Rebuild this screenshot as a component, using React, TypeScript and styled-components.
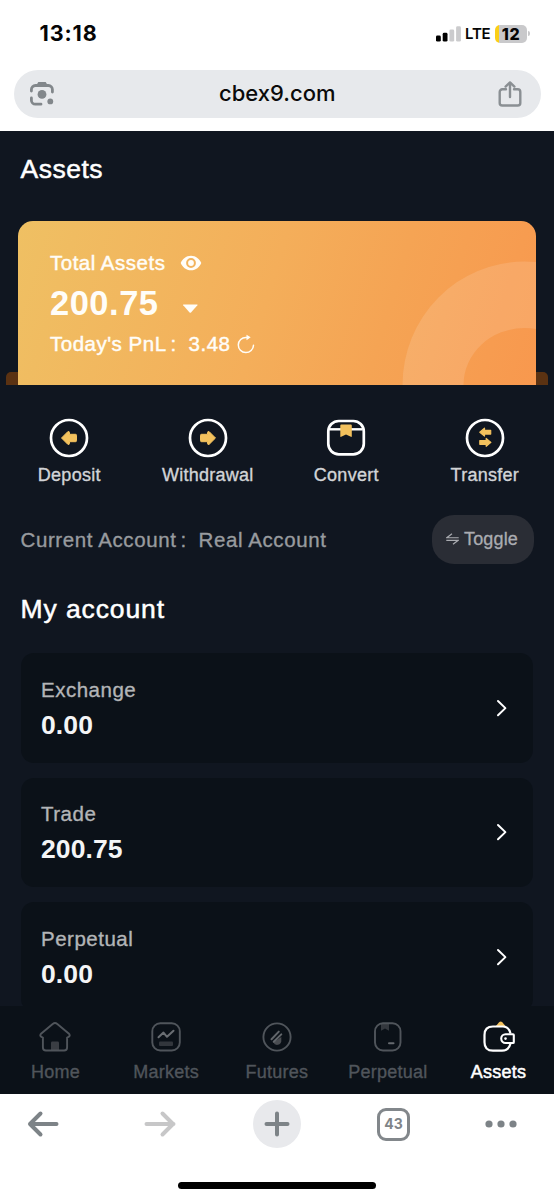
import React from 'react';
import styled, { createGlobalStyle } from 'styled-components';

const GlobalStyle = createGlobalStyle`
  * { box-sizing: border-box; }
  body {
    margin: 0;
    background: #fff;
    font-family: "Liberation Sans", Arial, "Noto Sans CJK SC", sans-serif;
  }
`;

const Screen = styled.div`
  width: 554px;
  height: 1199px;
  display: flex;
  flex-direction: column;
  overflow: hidden;
  background: #fff;
`;

/* Phone status bar */
const StatusBar = styled.header`
  height: 70px;
  flex: none;
  display: flex;
  justify-content: space-between;
  align-items: flex-start;
  padding: 20px 24px 0 39.5px;
  font-family: Inter, sans-serif;
  color: #050505;
`;

const Clock = styled.div`
  font-size: 21.5px;
  line-height: 27px;
  font-weight: 700;
  letter-spacing: 0.9px;
`;

const StatusRight = styled.div`
  display: flex;
  align-items: center;
  height: 27px;
`;

const Carrier = styled.span`
  margin-left: 4px;
  width: 25px;
  font-size: 15px;
  font-weight: 600;
  letter-spacing: -0.2px;
`;

const Battery = styled.div`
  margin-left: 5px;
  width: 32px;
  height: 18px;
  border-radius: 5px;
  background: linear-gradient(90deg, #fbcf17 0 4px, #c9c9cb 4px);
  font-size: 16px;
  line-height: 18px;
  font-weight: 800;
  text-align: center;
  letter-spacing: 0.6px;
`;

const BatteryTip = styled.i`
  width: 2px;
  height: 5px;
  margin-left: 1px;
  border-radius: 0 2px 2px 0;
  background: #c9c9cb;
`;

/* Browser address bar */
const AddressArea = styled.div`
  height: 61px;
  flex: none;
  padding: 0 13.5px;
`;

const AddressBar = styled.div`
  height: 47.5px;
  border-radius: 24px;
  background: #e7e9ec;
  display: flex;
  justify-content: space-between;
  align-items: center;
  padding: 0 17px 0 14.5px;
`;

const Url = styled.span`
  font-family: Inter, sans-serif;
  font-size: 22px;
  line-height: 28px;
  font-weight: 500;
  color: #0a0a0a;
  padding: 0 0 2px 3px;
`;

/* Web page */
const Page = styled.main`
  height: 875px;
  flex: none;
  overflow: hidden;
  background: #101620;
  padding-top: 23px;
`;

const Heading = styled.h1<{ $spacing: number }>`
  margin: 0 20.5px;
  font-size: 26.5px;
  line-height: 30px;
  font-weight: 400;
  letter-spacing: ${(p) => p.$spacing}px;
  color: #fff;
  -webkit-text-stroke: 0.5px #fff;
`;

const Wallet = styled.section`
  position: relative;
  margin-top: 37px;
  padding: 0 18px;
  &::before {
    content: "";
    position: absolute;
    left: 6px;
    right: 6px;
    bottom: 0;
    height: 13px;
    border-radius: 5px 5px 0 0;
    background: #5b3212;
  }
`;

const BalanceCard = styled.div`
  position: relative;
  height: 163.5px;
  border-radius: 15px 15px 0 0;
  overflow: hidden;
  padding: 28px 32px 0;
  color: #fffdf8;
  background: linear-gradient(107deg, #efc063 0%, #f4ae5a 48%, #f5a454 70%, #f8984e 100%);
`;

const Ring = styled.svg`
  position: absolute;
  right: 0;
  bottom: 0;
`;

const CardRow = styled.div<{ $top?: number; $height: number }>`
  display: flex;
  align-items: center;
  height: ${(p) => p.$height}px;
  margin-top: ${(p) => p.$top ?? 0}px;
`;

const CardText = styled.span`
  display: block;
  font-size: 20.5px;
  line-height: 28px;
  letter-spacing: 0.5px;
  -webkit-text-stroke: 0.45px currentColor;
`;

const Balance = styled.strong`
  font-size: 34.5px;
  line-height: 40px;
  letter-spacing: 0.5px;
`;

const WideColon = styled.span`
  display: inline-block;
  width: 22px;
  padding-left: 4px;
`;

const Gap = styled.span<{ $width: number }>`
  width: ${(p) => p.$width}px;
`;

const Actions = styled.div`
  display: grid;
  grid-template-columns: repeat(4, 1fr);
  padding-top: 33px;
`;

const Action = styled.div`
  display: flex;
  flex-direction: column;
  align-items: center;
  gap: 6.5px;
  font-size: 18px;
  line-height: 22px;
  letter-spacing: 0.25px;
  color: #d2d4d7;
  -webkit-text-stroke: 0.35px currentColor;
`;

const AccountRow = styled.div`
  display: flex;
  justify-content: space-between;
  align-items: center;
  margin: 28.5px 20.5px 29.5px;
  height: 49.5px;
`;

const AccountText = styled.div`
  padding-top: 2px;
  font-size: 20.5px;
  line-height: 28px;
  letter-spacing: 0.6px;
  color: #989b9f;
  -webkit-text-stroke: 0.35px currentColor;
`;

const ToggleButton = styled.button`
  width: 102px;
  height: 49.5px;
  border: 0;
  padding: 0 1px 0 0;
  border-radius: 22px;
  background: #2a2d35;
  color: #aaacb1;
  display: flex;
  align-items: center;
  justify-content: center;
  gap: 5px;
  font: 18px/24px "Liberation Sans", Arial, sans-serif;
  letter-spacing: 0.15px;
  -webkit-text-stroke: 0.3px currentColor;
`;

const AccountList = styled.div`
  display: flex;
  flex-direction: column;
  gap: 15px;
  padding: 29.5px 21px 0 20.5px;
`;

const AccountCard = styled.div`
  height: 109.5px;
  flex: none;
  border-radius: 13px;
  background: #0b1118;
  display: flex;
  justify-content: space-between;
  align-items: center;
  padding: 0 25px 0 20.5px;
`;

const AccountLabel = styled.div`
  font-size: 20.5px;
  line-height: 26px;
  letter-spacing: 0.5px;
  color: #b3b5b7;
  -webkit-text-stroke: 0.35px currentColor;
`;

const AccountValue = styled.div`
  margin-top: 7px;
  margin-bottom: -1px;
  font-size: 26.5px;
  line-height: 30px;
  font-weight: 700;
  letter-spacing: 0.1px;
  color: #f4f5f6;
`;

const TabBar = styled.nav`
  height: 88px;
  flex: none;
  background: #0b1118;
  display: grid;
  grid-template-columns: repeat(5, 1fr);
  padding-top: 14.5px;
`;

const Tab = styled.div<{ $active?: boolean }>`
  display: flex;
  flex-direction: column;
  align-items: center;
  gap: 8.5px;
  font-size: 18px;
  line-height: 22px;
  letter-spacing: 0.25px;
  color: ${(p) => (p.$active ? '#fff' : '#50555b')};
  -webkit-text-stroke: ${(p) => (p.$active ? 0.5 : 0.35)}px currentColor;
`;

/* Browser toolbar */
const BrowserBar = styled.footer`
  flex: 1;
  display: flex;
  flex-direction: column;
  background: #fff;
`;

const BrowserButtons = styled.div`
  display: grid;
  grid-template-columns: repeat(4, 48px) 29px;
  column-gap: 69px;
  justify-items: center;
  align-items: center;
  height: 60px;
  padding-left: 18.5px;
`;

const NewTab = styled.div`
  width: 48px;
  height: 48px;
  border-radius: 50%;
  background: #e8e9ec;
  display: grid;
  place-items: center;
`;

const TabCount = styled.div`
  width: 33px;
  height: 33px;
  border: 3.5px solid #82878b;
  border-radius: 9px;
  display: grid;
  place-items: center;
  font: 700 14px/20px Inter, sans-serif;
  color: #7f8488;
`;

const HomeIndicator = styled.div`
  width: 198px;
  height: 7px;
  border-radius: 4px;
  margin: 27.5px auto 0;
  background: #000;
`;

const SignalIcon = () => (
  <svg width="25" height="16" viewBox="0 0 25 16">
    <rect x="0" y="9.6" width="4.8" height="6" rx="1.4" fill="#000" />
    <rect x="6.7" y="6.8" width="4.8" height="8.8" rx="1.4" fill="#000" />
    <rect x="13.4" y="3.6" width="4.8" height="12" rx="1.4" fill="#cbcbcd" />
    <rect x="20.1" y="0.3" width="4.8" height="15.3" rx="1.4" fill="#cbcbcd" />
  </svg>
);

const LensIcon = () => (
  <svg width="28" height="28" viewBox="0 0 28 28" fill="none" stroke="#82878b" strokeWidth="2.8" strokeLinecap="round">
    <path d="M3.4 11V9.5a4 4 0 0 1 4-4h13a4 4 0 0 1 4 4V12" />
    <path d="M3.4 18v2.2a4 4 0 0 0 4 4H13" />
    <path d="M8.5 5 10.3 2h7.4l1.8 3z" fill="#82878b" stroke="none" />
    <circle cx="14" cy="14.4" r="4.4" fill="#82878b" stroke="none" />
    <circle cx="22.3" cy="21.4" r="2.9" fill="#82878b" stroke="none" />
  </svg>
);

const ShareIcon = () => (
  <svg width="28" height="28" viewBox="0 0 28 28" fill="none" stroke="#8a8f93" strokeWidth="2.4" strokeLinecap="round" strokeLinejoin="round">
    <path d="M10 9.3H6.3a2.6 2.6 0 0 0-2.6 2.6v11a2.6 2.6 0 0 0 2.6 2.6h15.4a2.6 2.6 0 0 0 2.6-2.6v-11a2.6 2.6 0 0 0-2.6-2.6H18" />
    <path d="M14 17V3M9.6 6.6 14 2.4l4.4 4.2" />
  </svg>
);

const EyeIcon = () => (
  <svg width="22" height="16" viewBox="0 0 22 16">
    <path fillRule="evenodd" fill="#fffdf8" d="M11 .7C16 .7 19.6 4 21.3 8 19.6 12 16 15.3 11 15.3S2.4 12 .7 8C2.4 4 6 .7 11 .7ZM11 3.1a4.900 4.900 0 1 0 0 9.800 4.900 4.900 0 0 0 0-9.800Z" />
    <circle cx="11" cy="8" r="2.9" fill="#fffdf8" />
  </svg>
);

const RefreshIcon = () => (
  <svg width="18" height="20" viewBox="0 0 18 20" fill="none" stroke="#fffdf8" strokeWidth="1.5" strokeLinecap="round">
    <path d="M11.5 3.400H9a7.600 7.600 0 1 0 7.500 7.800" />
    <path d="M9.500.8 13.700 3.300 9.500 6.200z" fill="#fffdf8" stroke="none" />
  </svg>
);

const DepositIcon = ({ flip }: { flip?: boolean }) => (
  <svg width="40" height="40" viewBox="0 0 40 40">
    <circle cx="20" cy="20" r="18" fill="none" stroke="#fff" strokeWidth="2.7" />
    <g transform={flip ? 'translate(40 0) scale(-1 1)' : undefined}>
      <path d="M12.500 20 18.700 13.800q1.600-1 1.800.7V16.300h6q1 0 1 1v5.400q0 1-1 1h-6v1.800q-.2 1.700-1.800.7z" fill="#f3c15d" stroke="#f3c15d" strokeWidth="1" strokeLinejoin="round" />
    </g>
  </svg>
);

const ConvertIcon = () => (
  <svg width="40" height="40" viewBox="0 0 40 40" fill="none">
    <rect x="2.300" y="3" width="35.500" height="33.300" rx="10.500" stroke="#fff" strokeWidth="2.700" />
    <path d="M4 11.300h32" stroke="#fff" strokeWidth="2.400" />
    <path d="M14.300 7.500q0-1 1-1h9.500q1 0 1 1v10.700q0 .9-.9.6L20 16.600l-4.800 2.200q-.9.300-.9-.6z" fill="#f3c15d" />
  </svg>
);

const TransferIcon = () => (
  <svg width="40" height="40" viewBox="0 0 40 40">
    <circle cx="20" cy="20" r="18" fill="none" stroke="#fff" strokeWidth="2.700" />
    <g fill="#f3c15d" stroke="#f3c15d" strokeWidth="1.200" strokeLinejoin="round">
      <path d="M14.800 14.200 19.500 10.200v2.100H25.700v3.800H19.500v2z" />
      <path d="M25.900 24.400 21.200 20.400v2.100H14.800v3.800h6.400v2z" />
    </g>
  </svg>
);

const ToggleIcon = () => (
  <svg width="13" height="12" viewBox="0 0 13 12" fill="none" stroke="#aaacb1" strokeWidth="1.150">
    <path d="M6 .7.800 4.700H12.700M.3 7.300H12.200L7 11.300" />
  </svg>
);

const Chevron = () => (
  <svg width="12" height="18" viewBox="0 0 12 18" fill="none" stroke="#fff" strokeWidth="2" strokeLinecap="round" strokeLinejoin="round">
    <path d="M2 2 9.400 9.100 2 16.200" />
  </svg>
);

const HomeIcon = () => (
  <svg width="32" height="32" viewBox="0 0 32 32" fill="none">
    <path d="M12 21.700q0-1.200 1.200-1.200h5.600q1.200 0 1.200 1.200V29.500h-8z" fill="#3a3d43" />
    <path d="M13.700 2.900q2.300-1.700 4.600 0L29.700 12.400q2.600 3-1.600 4.200V26.500q0 3-3 3H6.900q-3 0-3-3V16.600q-4.200-1.200-1.600-4.200z" stroke="#50555b" strokeWidth="1.900" strokeLinejoin="round" />
  </svg>
);

const MarketsIcon = () => (
  <svg width="32" height="32" viewBox="0 0 32 32" fill="none">
    <rect x="2.300" y="2.300" width="27.500" height="27.200" rx="8" stroke="#50555b" strokeWidth="1.900" />
    <rect x="9" y="20.500" width="14" height="4.500" rx="1" fill="#32363c" />
    <path d="M8.500 16.300 13.500 11.600 17 15.800 23.500 9.700" stroke="#6a6e73" strokeWidth="2" strokeLinecap="round" strokeLinejoin="round" />
  </svg>
);

const FuturesIcon = () => (
  <svg width="32" height="32" viewBox="0 0 32 32" fill="none">
    <circle cx="16" cy="16" r="13.600" stroke="#50555b" strokeWidth="1.900" />
    <path d="M12.300 21.300 20.300 16v4.500a4.200 4.200 0 0 1-8 .8z" fill="#4a4d52" />
    <path d="M10.500 18.200 17.800 10.600M12.700 20.700 20.300 13.400" stroke="#62666b" strokeWidth="2" strokeLinecap="round" />
  </svg>
);

const PerpetualIcon = () => (
  <svg width="32" height="32" viewBox="0 0 32 32" fill="none">
    <path d="M9 3h8v6.800l-4-2.300-4 2.300z" fill="#34383e" />
    <rect x="3" y="2.300" width="25.500" height="27.200" rx="8" stroke="#50555b" strokeWidth="1.900" />
    <path d="M17 22.200h4.500" stroke="#666a6f" strokeWidth="2" strokeLinecap="round" />
  </svg>
);

const AssetsIcon = () => (
  <svg width="34" height="32" viewBox="0 0 34 32" fill="none">
    <path d="M13.500 5.500 17.300 1.100q1.400-1.100 2.800 0L24.300 6z" fill="#f3c15d" />
    <path d="M28.500 12.500q-1.700-7-7.500-7H11Q2.500 5.500 2.500 14v7.200q0 8.500 8.500 8.500h9q6.800 0 8.500-7.200" stroke="#fff" strokeWidth="2.200" />
    <path d="M31 13.200H23.600a4.400 4.400 0 0 0 0 8.800H31q.8 0 .8-.8V14q0-.8-.8-.8z" stroke="#fff" strokeWidth="2.100" strokeLinejoin="round" />
    <circle cx="23.500" cy="17.600" r="1.300" fill="#fff" />
  </svg>
);

const ArrowIcon = ({ forward }: { forward?: boolean }) => (
  <svg width="32" height="28" viewBox="0 0 32 28" fill="none" stroke={forward ? '#c7c7c8' : '#7d8387'} strokeWidth="4" strokeLinecap="round" strokeLinejoin="round">
    <path d={forward ? 'M2.500 14h27M18.500 3.500 29 14 18.500 24.500' : 'M29.500 14H3M13.500 3.500 3 14l10.500 10.500'} />
  </svg>
);

const accounts = [
  { name: 'Exchange', value: '0.00' },
  { name: 'Trade', value: '200.75' },
  { name: 'Perpetual', value: '0.00' },
];

export default function App() {
  return (
    <Screen>
      <GlobalStyle />
      <StatusBar>
        <Clock>13:18</Clock>
        <StatusRight>
          <SignalIcon />
          <Carrier>LTE</Carrier>
          <Battery>12</Battery>
          <BatteryTip />
        </StatusRight>
      </StatusBar>
      <AddressArea>
        <AddressBar>
          <LensIcon />
          <Url>cbex9.com</Url>
          <ShareIcon />
        </AddressBar>
      </AddressArea>

      <Page>
        <Heading $spacing={0.5}>Assets</Heading>
        <Wallet>
          <BalanceCard>
            <Ring width="134" height="124" viewBox="0 0 134 124">
              <path
                fillRule="evenodd"
                fill="#fff"
                fillOpacity="0.13"
                d="M.5 124a122 123.500 0 0 1 244 0zM61.500 124a61 57 0 0 1 122 0z"
              />
            </Ring>
            <CardRow $height={28}>
              <CardText>Total Assets</CardText>
              <Gap $width={15} />
              <EyeIcon />
            </CardRow>
            <CardRow $height={40} $top={5.5}>
              <Balance>200.75</Balance>
              <svg width="40" height="24" viewBox="0 0 40 24">
                <path d="M24.500 13.500h13.500q1 0 .4.800L32 21.500q-.7.600-1.400 0L24.200 14.300q-.5-.8.300-.8z" fill="#fffdf8" />
              </svg>
            </CardRow>
            <CardRow $height={28} $top={7.5}>
              <CardText>
                Today's PnL<WideColon>:</WideColon>3.48
              </CardText>
              <Gap $width={6.5} />
              <RefreshIcon />
            </CardRow>
          </BalanceCard>
        </Wallet>

        <Actions>
          <Action><DepositIcon />Deposit</Action>
          <Action><DepositIcon flip />Withdrawal</Action>
          <Action><ConvertIcon />Convert</Action>
          <Action><TransferIcon />Transfer</Action>
        </Actions>

        <AccountRow>
          <AccountText>
            Current Account<WideColon>:</WideColon>Real Account
          </AccountText>
          <ToggleButton><ToggleIcon />Toggle</ToggleButton>
        </AccountRow>

        <Heading as="h2" $spacing={0.9}>My account</Heading>
        <AccountList>
          {accounts.map((a) => (
            <AccountCard key={a.name}>
              <div>
                <AccountLabel>{a.name}</AccountLabel>
                <AccountValue>{a.value}</AccountValue>
              </div>
              <Chevron />
            </AccountCard>
          ))}
        </AccountList>
      </Page>

      <TabBar>
        <Tab><HomeIcon />Home</Tab>
        <Tab><MarketsIcon />Markets</Tab>
        <Tab><FuturesIcon />Futures</Tab>
        <Tab><PerpetualIcon />Perpetual</Tab>
        <Tab $active><AssetsIcon />Assets</Tab>
      </TabBar>

      <BrowserBar>
        <BrowserButtons>
          <ArrowIcon />
          <ArrowIcon forward />
          <NewTab>
            <svg width="28" height="28" viewBox="0 0 28 28" stroke="#7d8387" strokeWidth="4" strokeLinecap="round">
              <path d="M14 3.500v21M3.500 14h21" />
            </svg>
          </NewTab>
          <TabCount>43</TabCount>
          <svg width="32" height="8" viewBox="0 0 32 8" fill="#7d8387">
            <circle cx="4" cy="4" r="3.600" />
            <circle cx="16" cy="4" r="3.600" />
            <circle cx="28" cy="4" r="3.600" />
          </svg>
        </BrowserButtons>
        <HomeIndicator />
      </BrowserBar>
    </Screen>
  );
}
